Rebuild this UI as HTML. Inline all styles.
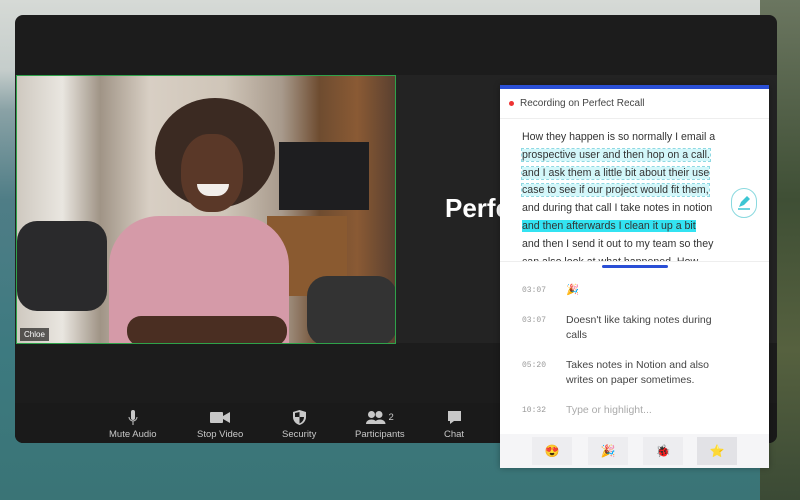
<!DOCTYPE html>
<html><head><meta charset="utf-8"><style>
*{margin:0;padding:0;box-sizing:border-box}
body{width:800px;height:500px;overflow:hidden;position:relative;font-family:"Liberation Sans",sans-serif;
background:linear-gradient(180deg,#d6dad6 0%,#c5cdcb 14%,#8aa2a6 22%,#4f7d86 40%,#3d7a80 70%,#3a7476 100%);}
.land{position:absolute;right:0;top:0;width:40px;height:500px;background:linear-gradient(180deg,#6b7660,#3f4f35 40%,#56613f 70%,#3b4a35);}
.win{position:absolute;left:15px;top:15px;width:762px;height:428px;background:#1c1c1c;border-radius:8px;overflow:hidden}
.stage{position:absolute;left:0;top:60px;width:762px;height:268px;background:#232323}
.tile{position:absolute;left:1px;top:60px;width:380px;height:269px;border:1.5px solid #2fa24a;overflow:hidden;
background:linear-gradient(90deg,#cfc9c0 0%,#e9e6e0 12%,#a09486 22%,#d8cfc4 35%,#cfc5b8 55%,#a89a8c 70%,#6e4c30 80%,#8a5a34 90%,#5a4030 100%)}
.name{position:absolute;left:3px;bottom:2px;background:rgba(0,0,0,.6);color:#fff;font-size:8px;padding:2px 4px}
.perf{position:absolute;left:430px;top:178px;color:#fff;font-weight:bold;font-size:26px}
.bar{position:absolute;left:0;top:388px;width:762px;height:40px;background:#1a1a1a}
.btn{position:absolute;top:394px;color:#c8c8c8;font-size:9.5px;text-align:center}
.btn .i{height:17px;margin:0 auto 3px;display:flex;justify-content:center;align-items:center}
.panel{position:absolute;left:500px;top:85px;width:269px;height:383px;background:#fff;border-top:4px solid #2a4fd6;box-shadow:0 0 6px rgba(0,0,0,.3)}
.hdr{height:30px;border-bottom:1px solid #eee;font-size:10px;color:#444;padding:9px 0 0 20px;position:relative;background:#fff}
.hdr:before{content:"";position:absolute;left:9px;top:12px;width:5px;height:5px;border-radius:50%;background:#e33}
.tr{position:absolute;left:0;top:30px;width:269px;height:143px;overflow:hidden;background:#fff;border-bottom:1px solid #eee}
.tr p{position:absolute;left:22px;top:10px;font-size:10.6px;color:#333;line-height:17.8px;white-space:nowrap}
.hl{background:#d3f7fa;outline:1px dashed #8fd9e3}
.hl2{background:#33e3f2}
.pen{position:absolute;left:231px;top:69px;width:26px;height:30px;border:1.5px solid #8ad9df;border-radius:14px;background:#fff}
.ind{position:absolute;left:102px;top:176px;width:66px;height:3px;background:#2a4fd6;border-radius:2px}
.row{position:absolute;left:22px;font-size:10.5px;color:#444;line-height:15px}
.row .t{position:absolute;left:0;font-family:"Liberation Mono",monospace;font-size:8px;color:#999;width:40px}
.row .x{position:absolute;left:44px;width:160px}
.emo{position:absolute;left:0;top:345px;width:269px;height:34px;background:#f5f5f7}
.emo div{position:absolute;top:3px;width:40px;height:28px;background:#ededf0;font-size:12px;text-align:center;line-height:28px}
</style></head><body>
<div class="land"></div>
<div class="win">
 <div class="stage"></div>
 <div class="tile">
  <div style="position:absolute;left:262px;top:66px;width:90px;height:68px;background:#1e1e20"></div>
  <div style="position:absolute;left:250px;top:140px;width:80px;height:80px;background:#8a5a30"></div>
  <div style="position:absolute;left:0;top:145px;width:90px;height:90px;background:#2a2a2c;border-radius:20px"></div>
  <div style="position:absolute;left:290px;top:200px;width:90px;height:70px;background:#333;border-radius:20px"></div>
  <div style="position:absolute;left:138px;top:22px;width:120px;height:110px;background:#3b2a22;border-radius:50%"></div>
  <div style="position:absolute;left:164px;top:58px;width:62px;height:78px;background:#5a3828;border-radius:45%"></div>
  <div style="position:absolute;left:180px;top:108px;width:32px;height:12px;background:#f2eeea;border-radius:0 0 14px 14px"></div>
  <div style="position:absolute;left:92px;top:140px;width:180px;height:140px;background:#d59aa8;border-radius:50px 50px 0 0"></div>
  <div style="position:absolute;left:110px;top:240px;width:160px;height:30px;background:#4a2e22;border-radius:14px"></div>
  <div class="name">Chloe</div>
 </div>
 <div class="perf">Perfe</div>
 <div class="bar"></div>
 <div class="btn" style="left:94px"><div class="i"><svg width="10" height="17"><rect x="3" y="1" width="4" height="10" rx="2" fill="#c8c8c8"/><path d="M1 8a4 4 0 0 0 8 0M5 12v4" stroke="#c8c8c8" fill="none"/></svg></div>Mute Audio</div>
 <div class="btn" style="left:182px"><div class="i"><svg width="20" height="13"><rect x="0" y="1" width="13" height="11" rx="1" fill="#c8c8c8"/><path d="M13 5l7-4v11l-7-4z" fill="#c8c8c8"/></svg></div>Stop Video</div>
 <div class="btn" style="left:267px"><div class="i"><svg width="13" height="15"><path d="M6.5 0l6.5 2v5c0 4-3 7-6.5 8C3 14 0 11 0 7V2z" fill="#c8c8c8"/><path d="M6.5 2v5H2v-4z M6.5 7h4.5c0 3-2 5.5-4.5 6.5z" fill="#1a1a1a"/></svg></div>Security</div>
 <div class="btn" style="left:340px"><div class="i"><svg width="20" height="13"><circle cx="5.5" cy="3.5" r="3.5" fill="#c8c8c8"/><circle cx="13" cy="3.5" r="3.5" fill="#c8c8c8"/><path d="M0 13c0-6 11-6 11 0zM8.5 13c0-6 11-6 11 0z" fill="#c8c8c8"/></svg>&nbsp;2</div>Participants</div>
 <div class="btn" style="left:429px"><div class="i"><svg width="15" height="15"><path d="M1 1h13v10H7l-4 3v-3H1z" fill="#c8c8c8"/></svg></div>Chat</div>
</div>
<div class="panel">
 <div class="hdr">Recording on Perfect Recall</div>
 <div class="tr">
  <p>How they happen is so normally I email a<br><span class="hl">prospective user and then hop on a call.</span><br><span class="hl">and I ask them a little bit about their use</span><br><span class="hl">case to see if our project would fit them,</span><br>and during that call I take notes in notion<br><span class="hl2">and then afterwards I clean it up a bit</span><br>and then I send it out to my team so they<br>can also look at what happened. How</p>
  <div class="pen"><svg width="24" height="28" viewBox="0 0 24 28"><path d="M7 18l2-5 6-6 3 3-6 6z" fill="#3cc6d3"/><path d="M6 20h12" stroke="#3cc6d3" stroke-width="1.5"/></svg></div>
 </div>
 <div class="ind"></div>
 <div class="row" style="top:194px"><span class="t">03:07</span><span class="x">🎉</span></div>
 <div class="row" style="top:224px"><span class="t">03:07</span><span class="x">Doesn't like taking notes during calls</span></div>
 <div class="row" style="top:269px"><span class="t">05:20</span><span class="x">Takes notes in Notion and also writes on paper sometimes.</span></div>
 <div class="row" style="top:314px;color:#aaa"><span class="t">10:32</span><span class="x">Type or highlight...</span></div>
 <div class="emo"><div style="left:32px">😍</div><div style="left:88px">🎉</div><div style="left:143px">🐞</div><div style="left:197px;background:#e2e2e6">⭐</div></div>
</div>
</body></html>
